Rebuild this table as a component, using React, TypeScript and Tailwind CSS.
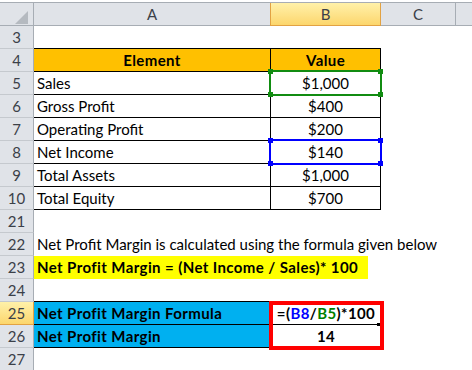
import React from "react"

const ROW_BORDER = "border-[#c5c9ce]"

function RowHead({ n, active }: { n: string; active?: boolean }) {
  return (
    <div
      className={
        "flex h-full w-[34px] shrink-0 items-center justify-center border-b border-r text-[15px] text-[#3b4048] " +
        (active
          ? "border-r-[#e2a243] border-b-[#e2a243] bg-gradient-to-b from-[#fff1a9] to-[#fcd66c]"
          : `border-r-[#a7adb4] ${ROW_BORDER} bg-[#e0e3e8]`)
      }
    >
      {n}
    </div>
  )
}

function Row({ n, active, children }: { n: string; active?: boolean; children?: React.ReactNode }) {
  return (
    <div className="flex h-[23px]">
      <RowHead n={n} active={active} />
      {children}
    </div>
  )
}

function DataRow({ n, label, value }: { n: string; label: string; value: string }) {
  return (
    <Row n={n}>
      <div className="flex w-[237px] items-center border-b border-r border-black pl-[3px]">{label}</div>
      <div className="flex w-[110px] items-center justify-center border-b border-r border-black">{value}</div>
    </Row>
  )
}

function Marker({ top, color }: { top: number; color: "green" | "blue" }) {
  const border = color === "green" ? "border-[#118c11]" : "border-[#0000ff]"
  const fill = color === "green" ? "bg-[#118c11]" : "bg-[#0000ff]"
  return (
    <div className="pointer-events-none absolute left-[269px] h-[26px] w-[113px]" style={{ top }}>
      <div className={"absolute inset-0 border-2 " + border} />
      <div className={"absolute -left-[1px] -top-[1px] h-[5px] w-[5px] " + fill} />
      <div className={"absolute -right-[1px] -top-[1px] h-[5px] w-[5px] " + fill} />
      <div className={"absolute -bottom-[1px] -left-[1px] h-[5px] w-[5px] " + fill} />
      <div className={"absolute -bottom-[1px] -right-[1px] h-[5px] w-[5px] " + fill} />
    </div>
  )
}

export default function App() {
  return (
    <div className="relative h-[370px] w-[472px] overflow-hidden bg-white font-[Lato,sans-serif] text-[15px] leading-none text-black">
      {/* column headers */}
      <div className="mt-[2px] flex h-[24px] border-t border-[#a7adb4] bg-[#e0e3e8] text-[#3b4048]">
        <div className="relative w-[34px] shrink-0 border-b border-r border-[#a7adb4]">
          <svg className="absolute left-[14px] top-[7px]" width="15" height="15" viewBox="0 0 15 15">
            <polygon points="14,1 14,14 1,14" fill="#b5bac0" />
          </svg>
        </div>
        <div className="flex w-[236px] items-center justify-center border-b border-[#a7adb4]">A</div>
        <div className="flex w-[111px] items-center justify-center border-x border-b border-[#e2a243] bg-gradient-to-b from-[#fff1a9] to-[#fcd66c]">
          B
        </div>
        <div className="flex w-[75px] items-center justify-center border-b border-r border-[#a7adb4]">C</div>
        <div className="flex-1 border-b border-[#a7adb4]" />
      </div>

      <Row n="3">
        <div className="w-[237px] border-b border-black" />
        <div className="w-[110px] border-b border-black" />
      </Row>
      <Row n="4">
        <div className="flex w-[237px] items-center justify-center border-b border-r border-black bg-[#ffc000] font-bold tracking-[0.4px]">
          Element
        </div>
        <div className="flex w-[110px] items-center justify-center border-b border-r border-black bg-[#ffc000] font-bold tracking-[0.4px]">
          Value
        </div>
      </Row>
      <DataRow n="5" label="Sales" value="$1,000" />
      <DataRow n="6" label="Gross Profit" value="$400" />
      <DataRow n="7" label="Operating Profit" value="$200" />
      <DataRow n="8" label="Net Income" value="$140" />
      <DataRow n="9" label="Total Assets" value="$1,000" />
      <DataRow n="10" label="Total Equity" value="$700" />
      <Row n="21" />
      <Row n="22">
        <div className="flex flex-1 items-center whitespace-nowrap pl-[3px]">
          Net Profit Margin is calculated using the formula given below
        </div>
      </Row>
      <Row n="23">
        <div className="flex w-[334px] items-center whitespace-nowrap bg-[#ffff00] pl-[3px] font-bold tracking-[0.4px]">
          Net Profit Margin = (Net Income / Sales)* 100
        </div>
      </Row>
      <Row n="24">
        <div className="w-[237px] border-b border-black" />
        <div className="w-[110px] border-b border-black" />
      </Row>
      <Row n="25" active>
        <div className="flex w-[237px] items-center border-b border-r border-black bg-[#00b0f0] pl-[3px] font-bold tracking-[0.4px]">
          Net Profit Margin Formula
        </div>
        <div className="relative flex w-[110px] items-center justify-center border-b border-black font-bold tracking-[0.4px]">
          <span>
            =(<span className="text-[#0000ff]">B8</span>/<span className="text-[#008000]">B5</span>)*100
          </span>
          <div className="absolute -bottom-[2px] right-[1px] h-[3px] w-[3px] bg-black" />
        </div>
      </Row>
      <Row n="26">
        <div className="flex w-[237px] items-center border-b border-r border-black bg-[#00b0f0] pl-[3px] font-bold tracking-[0.4px]">
          Net Profit Margin
        </div>
        <div className="flex w-[110px] items-center justify-center font-bold tracking-[0.4px]">14</div>
      </Row>
      <Row n="27" />

      <Marker top={70} color="green" />
      <Marker top={139} color="blue" />
      <div className="pointer-events-none absolute left-[269px] top-[301px] h-[49px] w-[115px] border-4 border-[#ff0000]" />
    </div>
  )
}
